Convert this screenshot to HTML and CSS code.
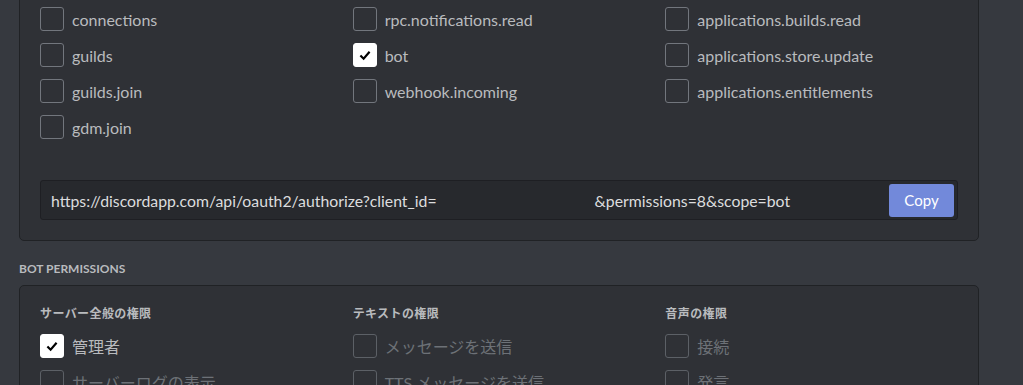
FILE: index.html
```html
<!DOCTYPE html>
<html lang="ja">
<head>
    <meta charset="UTF-8">
    <meta name="viewport" content="width=device-width, initial-scale=1.0">
    <title>OAuth2 URL Generator</title>
    <link rel="stylesheet" href="styles.css">
</head>
<body>
    <div class="page">

        <!-- スコープ -->
        <div class="card card-scopes">
            <div class="cols">
                <div class="col">
                    <label class="chk"><span class="box"></span><span class="txt">connections</span></label>
                    <label class="chk"><span class="box"></span><span class="txt">guilds</span></label>
                    <label class="chk"><span class="box"></span><span class="txt">guilds.join</span></label>
                    <label class="chk"><span class="box"></span><span class="txt">gdm.join</span></label>
                </div>
                <div class="col">
                    <label class="chk"><span class="box"></span><span class="txt">rpc.notifications.read</span></label>
                    <label class="chk on">
                        <span class="box"><svg viewBox="0 0 24 24"><polyline points="7,12.5 10.5,16 17,8.5"/></svg></span>
                        <span class="txt">bot</span>
                    </label>
                    <label class="chk"><span class="box"></span><span class="txt">webhook.incoming</span></label>
                </div>
                <div class="col">
                    <label class="chk"><span class="box"></span><span class="txt">applications.builds.read</span></label>
                    <label class="chk"><span class="box"></span><span class="txt">applications.store.update</span></label>
                    <label class="chk"><span class="box"></span><span class="txt">applications.entitlements</span></label>
                </div>
            </div>

            <!-- 生成されたURL -->
            <div class="url">
                <div class="url-text">https://discordapp.com/api/oauth2/authorize?client_id=<span class="hide"></span>&amp;permissions=8&amp;scope=bot</div>
                <button class="btn">Copy</button>
            </div>
        </div>

        <h5 class="sec-title">Bot Permissions</h5>

        <!-- 権限 -->
        <div class="card">
            <div class="cols">
                <div class="col">
                    <h6 class="col-title">サーバー全般の権限</h6>
                    <label class="chk on">
                        <span class="box"><svg viewBox="0 0 24 24"><polyline points="7,12.5 10.5,16 17,8.5"/></svg></span>
                        <span class="txt">管理者</span>
                    </label>
                    <label class="chk off"><span class="box"></span><span class="txt">サーバーログの表示</span></label>
                    <label class="chk off"><span class="box"></span><span class="txt">サーバーの管理</span></label>
                    <label class="chk off"><span class="box"></span><span class="txt">役職の管理</span></label>
                </div>
                <div class="col">
                    <h6 class="col-title">テキストの権限</h6>
                    <label class="chk off"><span class="box"></span><span class="txt">メッセージを送信</span></label>
                    <label class="chk off"><span class="box"></span><span class="txt">TTS メッセージを送信</span></label>
                    <label class="chk off"><span class="box"></span><span class="txt">メッセージの管理</span></label>
                    <label class="chk off"><span class="box"></span><span class="txt">埋め込みリンク</span></label>
                </div>
                <div class="col">
                    <h6 class="col-title">音声の権限</h6>
                    <label class="chk off"><span class="box"></span><span class="txt">接続</span></label>
                    <label class="chk off"><span class="box"></span><span class="txt">発言</span></label>
                    <label class="chk off"><span class="box"></span><span class="txt">メンバーをミュート</span></label>
                    <label class="chk off"><span class="box"></span><span class="txt">メンバーのスピーカーをミュート</span></label>
                </div>
            </div>
        </div>

    </div>
</body>
</html>
```

FILE: styles.css
```css
/* 全体 */
body {
    margin: 0;
    background: #36393f;
    font-family: Lato, "Noto Sans CJK JP", sans-serif;
    color: #b9bbbe;
}

.page {
    width: 960px;
    padding-left: 19px;
}

/* カード */
.card {
    background: #2f3136;
    border: 1px solid #202225;
    border-radius: 5px;
    padding: 20px;
}

/* 上のカードは途中までスクロールされている */
.card-scopes {
    margin-top: -14px;
}

/* 3列 */
.cols {
    display: grid;
    grid-template-columns: repeat(3, 1fr);
    column-gap: 20px;
}

.col {
    display: flex;
    flex-direction: column;
    gap: 12px;
}

/* チェックボックス */
.chk {
    display: flex;
    align-items: center;
    gap: 8px;
    height: 24px;
    font-size: 16px;
    white-space: nowrap;
}

.box {
    flex: none;
    width: 24px;
    height: 24px;
    box-sizing: border-box;
    border: 1px solid #72767d;
    border-radius: 3px;
}

.box svg {
    display: block;
    width: 22px;
    height: 22px;
    fill: none;
    stroke: #000;
    stroke-width: 2.4;
}

.chk.on .box {
    background: #fff;
    border-color: #fff;
}

.chk.off .box {
    border-color: #5c6066;
}

.chk.off .txt {
    color: #6d7177;
}

/* URL */
.url {
    display: flex;
    align-items: center;
    justify-content: space-between;
    height: 40px;
    box-sizing: border-box;
    margin-top: 41px;
    padding: 0 3px 0 10px;
    background: #27292d;
    border: 1px solid #1e1f23;
    border-radius: 3px;
    color: #dcddde;
    font-size: 15.8px;
}

.hide {
    display: inline-block;
    width: 158px;
}

.btn {
    width: 65px;
    height: 33px;
    border: none;
    border-radius: 3px;
    background: #7289da;
    color: #fff;
    font-family: inherit;
    font-size: 15px;
}

/* 見出し */
.sec-title {
    margin: 20px 0 8px;
    font-size: 12px;
    line-height: 16px;
    font-weight: 700;
    text-transform: uppercase;
    letter-spacing: 0;
    color: #b9bbbe;
}

.col-title {
    margin: 0;
    font-size: 12px;
    line-height: 16px;
    font-weight: 700;
    letter-spacing: .4px;
    color: #b9bbbe;
}
```
